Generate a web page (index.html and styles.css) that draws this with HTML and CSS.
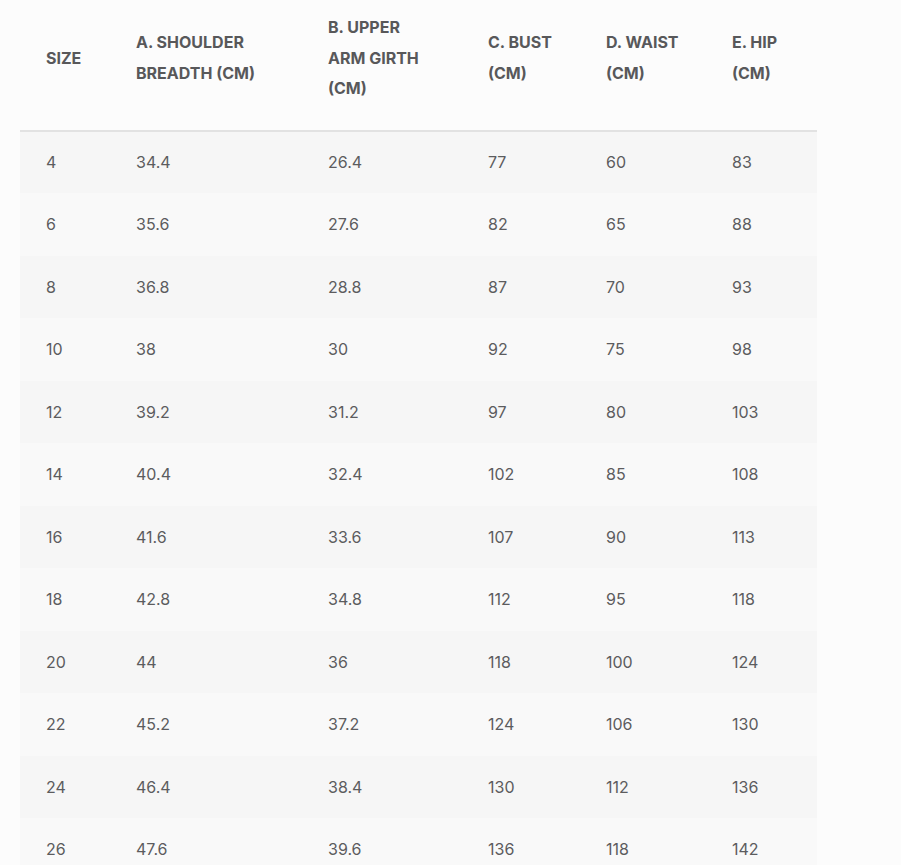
FILE: index.html
```html
<!DOCTYPE html>
<html lang="en">
<head>
<meta charset="utf-8">
<title>Size chart</title>
<link rel="stylesheet" href="styles.css">
</head>
<body>
<div class="wrap">
<table class="size-table">
  <colgroup>
    <col class="c1"><col class="c2"><col class="c3"><col class="c4"><col class="c5"><col class="c6">
  </colgroup>
  <thead>
    <tr>
      <th>SIZE</th>
      <th>A. SHOULDER<br>BREADTH (CM)</th>
      <th>B. UPPER<br>ARM GIRTH<br>(CM)</th>
      <th>C. BUST<br>(CM)</th>
      <th>D. WAIST<br>(CM)</th>
      <th>E. HIP<br>(CM)</th>
    </tr>
  </thead>
  <tbody>
    <tr><td>4</td><td>34.4</td><td>26.4</td><td>77</td><td>60</td><td>83</td></tr>
    <tr><td>6</td><td>35.6</td><td>27.6</td><td>82</td><td>65</td><td>88</td></tr>
    <tr><td>8</td><td>36.8</td><td>28.8</td><td>87</td><td>70</td><td>93</td></tr>
    <tr><td>10</td><td>38</td><td>30</td><td>92</td><td>75</td><td>98</td></tr>
    <tr><td>12</td><td>39.2</td><td>31.2</td><td>97</td><td>80</td><td>103</td></tr>
    <tr><td>14</td><td>40.4</td><td>32.4</td><td>102</td><td>85</td><td>108</td></tr>
    <tr><td>16</td><td>41.6</td><td>33.6</td><td>107</td><td>90</td><td>113</td></tr>
    <tr><td>18</td><td>42.8</td><td>34.8</td><td>112</td><td>95</td><td>118</td></tr>
    <tr><td>20</td><td>44</td><td>36</td><td>118</td><td>100</td><td>124</td></tr>
    <tr><td>22</td><td>45.2</td><td>37.2</td><td>124</td><td>106</td><td>130</td></tr>
    <tr><td>24</td><td>46.4</td><td>38.4</td><td>130</td><td>112</td><td>136</td></tr>
    <tr><td>26</td><td>47.6</td><td>39.6</td><td>136</td><td>118</td><td>142</td></tr>
  </tbody>
</table>
</div>
</body>
</html>
```

FILE: styles.css
```css
html, body {
  margin: 0;
  padding: 0;
  background: #fcfcfc;
}
body {
  font-family: Inter, "Liberation Sans", sans-serif;
  color: #5a5a5c;
}
.wrap {
  padding-left: 20px;
}
.size-table {
  width: 797px;
  border-collapse: collapse;
  table-layout: fixed;
}
.c1 { width: 90px; }
.c2 { width: 192px; }
.c3 { width: 160px; }
.c4 { width: 118px; }
.c5 { width: 126px; }
.c6 { width: 111px; }

.size-table th {
  text-align: left;
  font-size: 16px;
  font-weight: 700;
  line-height: 30.5px;
  padding: 12px 26px 26px;
  vertical-align: middle;
  border-bottom: 2px solid #e2e2e2;
  color: #58585a;
}
.size-table td {
  font-size: 16px;
  font-weight: 400;
  line-height: 20px;
  height: 62.5px;
  box-sizing: border-box;
  padding: 0 26px;
  vertical-align: middle;
  color: #5c5c5e;
}
.size-table tbody tr:nth-child(odd) { background: #f6f6f6; }
.size-table tbody tr:nth-child(even) { background: #f9f9f9; }
```
